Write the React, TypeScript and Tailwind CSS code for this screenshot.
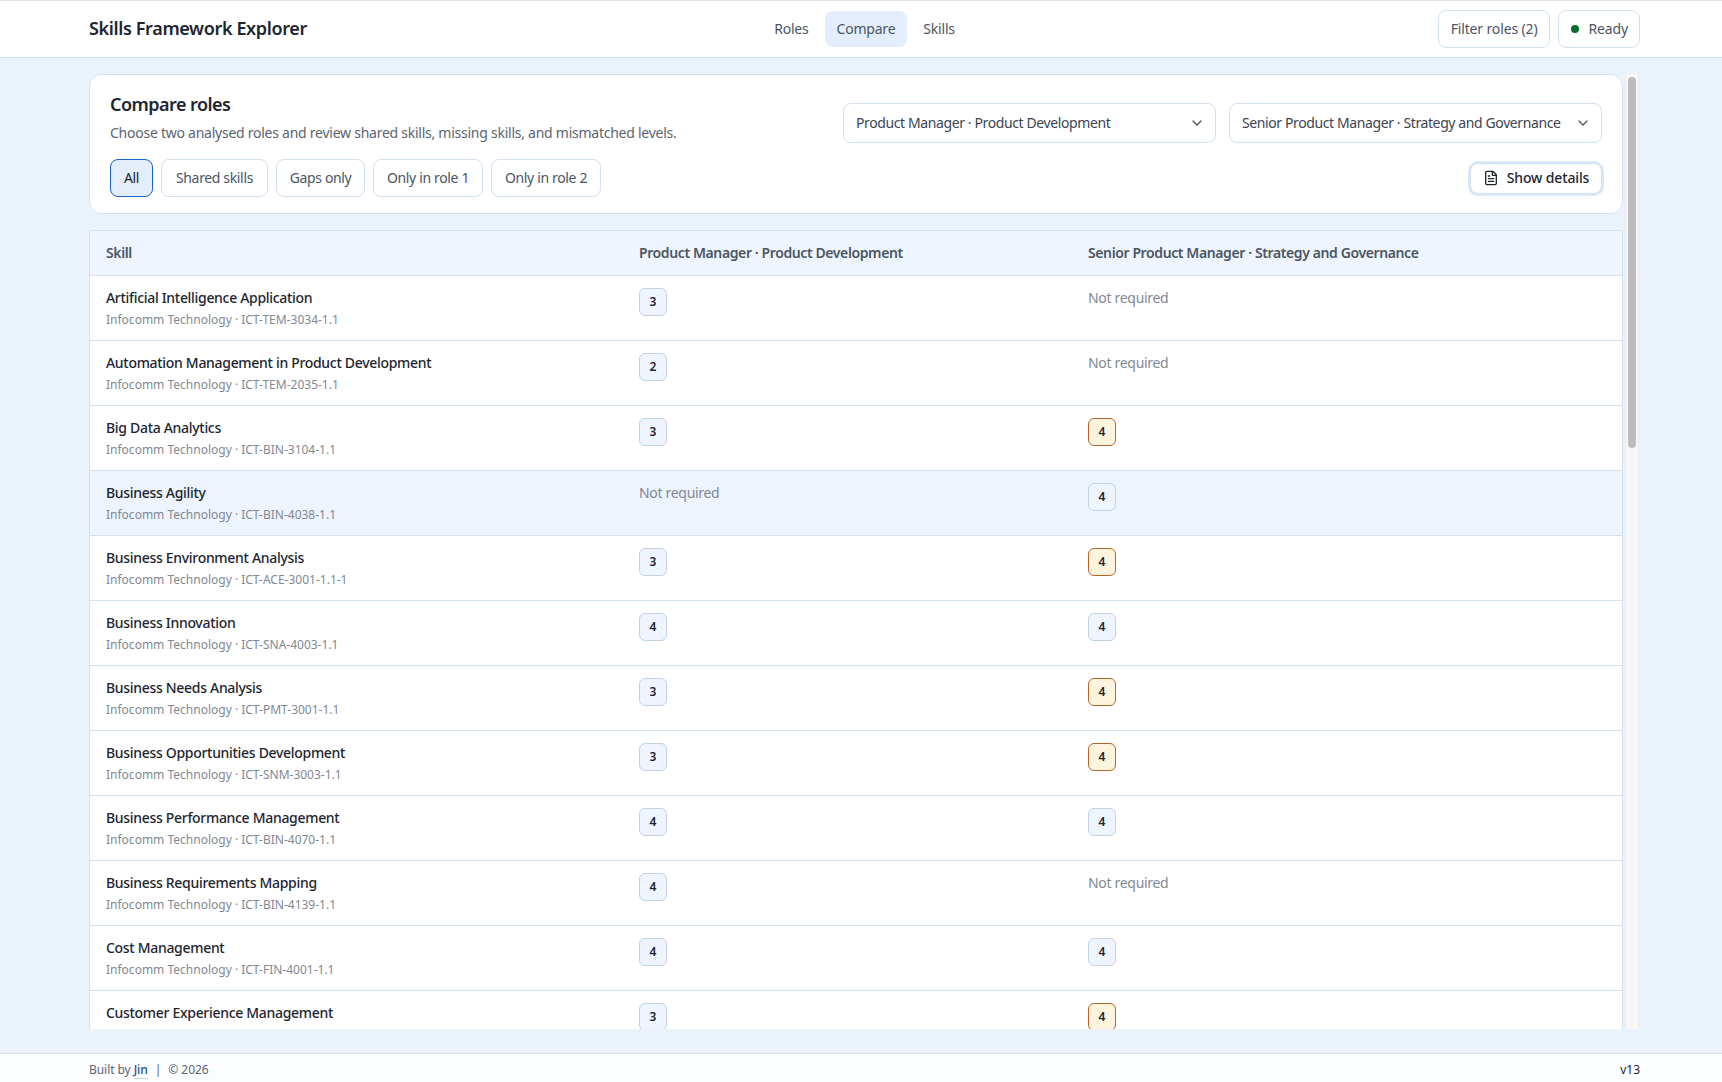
import { ChevronDown, FileText } from "lucide-react";

const filters = [
  { label: "All", width: "w-[43px]" },
  { label: "Shared skills", width: "w-[107px]" },
  { label: "Gaps only", width: "w-[89px]" },
  { label: "Only in role 1", width: "w-[110px]" },
  { label: "Only in role 2", width: "w-[110px]" },
];

type Row = { name: string; code?: string; a: number | null; b: number | null };

const rows: Row[] = [
  { name: "Artificial Intelligence Application", code: "ICT-TEM-3034-1.1", a: 3, b: null },
  { name: "Automation Management in Product Development", code: "ICT-TEM-2035-1.1", a: 2, b: null },
  { name: "Big Data Analytics", code: "ICT-BIN-3104-1.1", a: 3, b: 4 },
  { name: "Business Agility", code: "ICT-BIN-4038-1.1", a: null, b: 4 },
  { name: "Business Environment Analysis", code: "ICT-ACE-3001-1.1-1", a: 3, b: 4 },
  { name: "Business Innovation", code: "ICT-SNA-4003-1.1", a: 4, b: 4 },
  { name: "Business Needs Analysis", code: "ICT-PMT-3001-1.1", a: 3, b: 4 },
  { name: "Business Opportunities Development", code: "ICT-SNM-3003-1.1", a: 3, b: 4 },
  { name: "Business Performance Management", code: "ICT-BIN-4070-1.1", a: 4, b: 4 },
  { name: "Business Requirements Mapping", code: "ICT-BIN-4139-1.1", a: 4, b: null },
  { name: "Cost Management", code: "ICT-FIN-4001-1.1", a: 4, b: 4 },
  { name: "Customer Experience Management", a: 3, b: 4 },
];

function Level({ value, mismatch }: { value: number | null; mismatch?: boolean }) {
  if (value === null) {
    return (
      <span className="block text-[14px] leading-[20px] tracking-[-0.022em] text-[#7f8894]">Not required</span>
    );
  }
  return (
    <span
      className={
        mismatch
          ? "flex h-[28px] w-[28px] items-center justify-center rounded-[6px] border border-[#b8652b] bg-[#fdf4dd] text-[12px] font-semibold text-[#1d2530]"
          : "flex h-[28px] w-[28px] items-center justify-center rounded-[6px] border border-[#bfd2e8] bg-[#eef5fe] text-[12px] font-semibold text-[#1d2530]"
      }
    >
      {value}
    </span>
  );
}

function RoleSelect({ label }: { label: string }) {
  return (
    <button className="flex h-[40px] w-[373px] items-center justify-between rounded-[8px] border border-[#d3e0ef] bg-white pl-[12px] pr-[10px] text-[14px] tracking-[-0.028em] text-[#3b4450]">
      <span className="whitespace-nowrap pb-[2px]">{label}</span>
      <ChevronDown size={16} className="shrink-0 text-[#4b5563]" />
    </button>
  );
}

export default function App() {
  return (
    <div className="flex h-[1082px] flex-col overflow-hidden bg-[#eaf2fc] font-['Noto_Sans',sans-serif] text-[#1d2530]">
      {/* Top bar */}
      <header className="grid h-[58px] shrink-0 grid-cols-[1fr_auto_1fr] items-center border-t border-b border-t-[#dfe3df] border-b-[#d3e0ef] bg-white pl-[89px] pr-[82px]">
        <div className="-mt-[2px] text-[18px] font-semibold tracking-[-0.02em]">Skills Framework Explorer</div>
        <nav className="flex items-center gap-[4px] text-[14px] tracking-[-0.015em] text-[#4b5563]">
          <a className="flex h-[36px] items-center rounded-[8px] px-[12px] pb-[1px]">Roles</a>
          <a className="flex h-[36px] items-center rounded-[8px] bg-[#e3edfb] px-[12px] pb-[1px]">Compare</a>
          <a className="flex h-[36px] items-center rounded-[8px] px-[12px] pb-[1px]">Skills</a>
        </nav>
        <div className="flex items-center justify-end gap-[8px] text-[14px] tracking-[-0.01em] text-[#4b5563]">
          <button className="flex h-[38px] items-center rounded-[8px] border border-[#d3e0ef] bg-white px-[12px] pb-[1px]">
            Filter roles (2)
          </button>
          <div className="flex h-[38px] items-center gap-[9px] rounded-[8px] border border-[#d3e0ef] bg-white pb-[1px] pl-[12px] pr-[11px]">
            <span className="h-[8px] w-[8px] rounded-full bg-[#0b6b2e]" />
            Ready
          </div>
        </div>
      </header>

      <main className="flex min-h-0 flex-1 gap-[2px] pb-[24px] pl-[89px] pr-[83px] pt-[16px]">
        <div className="min-w-0 flex-1 overflow-hidden">
          {/* Controls card */}
          <section className="h-[140px] rounded-[12px] border border-[#d3e0ef] bg-white px-[20px] pt-[17px]">
            <div className="flex items-start justify-between">
              <div>
                <h1 className="text-[18px] font-semibold leading-[24px] tracking-[-0.03em]">Compare roles</h1>
                <p className="mt-[7px] text-[14px] leading-[20px] tracking-[-0.018em] text-[#5b6470]">
                  Choose two analysed roles and review shared skills, missing skills, and mismatched levels.
                </p>
              </div>
              <div className="mt-[11px] flex gap-[13px]">
                <RoleSelect label="Product Manager · Product Development" />
                <RoleSelect label="Senior Product Manager · Strategy and Governance" />
              </div>
            </div>
            <div className="mt-[16px] flex items-center justify-between">
              <div className="flex gap-[8px]">
                {filters.map((f, i) => (
                  <button
                    key={f.label}
                    className={`flex h-[38px] items-center justify-center rounded-[8px] border pb-[2px] text-[14px] tracking-[-0.025em] ${f.width} ${
                      i === 0 ? "border-[#1a64c8] bg-[#e4eefb] text-[#1d2530]" : "border-[#d3e0ef] bg-white text-[#4b5563]"
                    }`}
                  >
                    {f.label}
                  </button>
                ))}
              </div>
              <button className="flex h-[31px] w-[132px] items-center justify-center gap-[8px] rounded-[8px] border border-[#d3e0ef] bg-white text-[14px] font-medium tracking-[-0.01em] text-[#1d2530] shadow-[0_0_0_2px_#dbe8f8]">
                <FileText size={16} />
                <span className="pb-[2px]">Show details</span>
              </button>
            </div>
          </section>

          {/* Comparison table */}
          <section className="mt-[16px] rounded-t-[4px] border-x border-t border-[#d3e0ef] bg-white">
            <div className="grid h-[45px] grid-cols-[533px_449px_1fr] items-center rounded-t-[4px] border-b border-[#d3e0ef] bg-[#eef5fe] pb-[2px] text-[14px] font-semibold tracking-[-0.028em] text-[#4b5563]">
              <div className="px-[16px]">Skill</div>
              <div className="px-[16px]">Product Manager · Product Development</div>
              <div className="px-[16px]">Senior Product Manager · Strategy and Governance</div>
            </div>
            {rows.map((r) => (
              <div
                key={r.name}
                className={
                  r.name === "Business Agility"
                    ? "grid h-[65px] grid-cols-[533px_449px_1fr] border-b border-[#d3e0ef] bg-[#edf4fe] pt-[12px]"
                    : "grid h-[65px] grid-cols-[533px_449px_1fr] border-b border-[#d3e0ef] pt-[12px]"
                }
              >
                <div className="px-[16px]">
                  <div className="text-[14px] font-medium leading-[20px] tracking-[-0.022em]">{r.name}</div>
                  {r.code && (
                    <div className="mt-[3px] text-[12px] leading-[18px] text-[#7f8894]">
                      Infocomm Technology · {r.code}
                    </div>
                  )}
                </div>
                <div className="px-[16px]">
                  <Level value={r.a} />
                </div>
                <div className="px-[16px]">
                  <Level value={r.b} mismatch={r.a !== null && r.b !== null && r.a !== r.b} />
                </div>
              </div>
            ))}
          </section>
        </div>

        {/* Scrollbar */}
        <div className="w-[14px] shrink-0 border-x border-[#ececec] bg-[#f8f8f8] px-[2px] pt-[3px]">
          <div className="h-[371px] rounded-full bg-[#bdbdbd]" />
        </div>
      </main>

      <footer className="flex h-[29px] shrink-0 items-center justify-between border-t border-[#d3e0ef] bg-[#fcfdfe] pl-[89px] pr-[82px] pt-[3px] text-[12px] text-[#5b6470]">
        <div className="tracking-[-0.005em]">
          Built by{" "}
          <a className="border-b border-[#bcd2ee] font-medium text-[#1e4fa0]">Jin</a>
          <span className="mx-[7px]">|</span>© 2026
        </div>
        <div className="text-[#1d2530]">v13</div>
      </footer>
    </div>
  );
}
